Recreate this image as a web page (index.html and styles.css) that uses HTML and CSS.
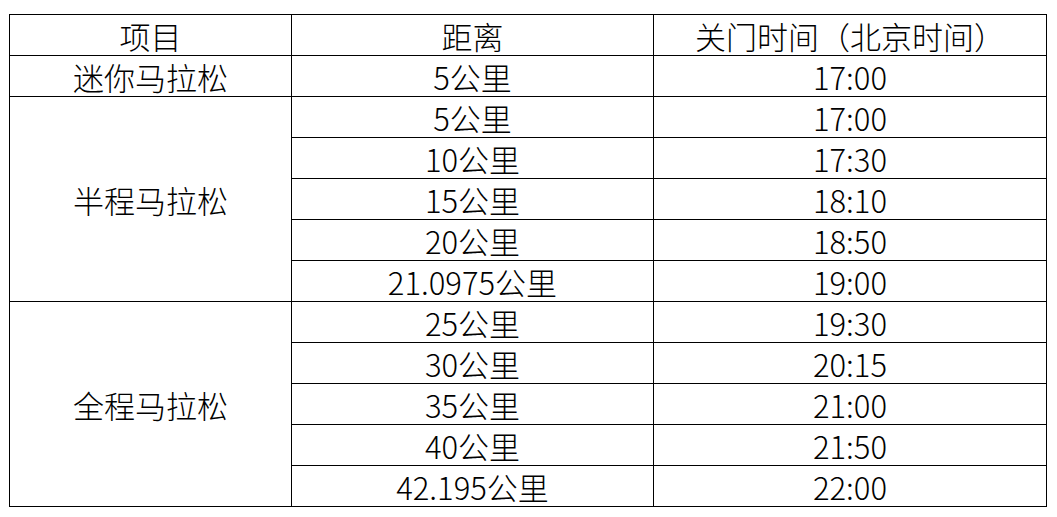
FILE: index.html
```html
<!DOCTYPE html>
<html lang="zh">
<head>
<meta charset="utf-8">
<link rel="stylesheet" href="styles.css">
</head>
<body>
<div class="page">
<table class="grid">
  <colgroup><col class="c1"><col class="c2"><col class="c3"></colgroup>
  <tr><td>项目</td><td>距离</td><td>关门时间（北京时间）</td></tr>
  <tr><td>迷你马拉松</td><td>5公里</td><td>17:00</td></tr>
  <tr><td rowspan="5">半程马拉松</td><td>5公里</td><td>17:00</td></tr>
  <tr><td>10公里</td><td>17:30</td></tr>
  <tr><td>15公里</td><td>18:10</td></tr>
  <tr><td>20公里</td><td>18:50</td></tr>
  <tr><td>21.0975公里</td><td>19:00</td></tr>
  <tr><td rowspan="5">全程马拉松</td><td>25公里</td><td>19:30</td></tr>
  <tr><td>30公里</td><td>20:15</td></tr>
  <tr><td>35公里</td><td>21:00</td></tr>
  <tr><td>40公里</td><td>21:50</td></tr>
  <tr><td>42.195公里</td><td>22:00</td></tr>
</table>
</div>
</body>
</html>
```
FILE: styles.css
```css
html, body { margin: 0; padding: 0; background: #fff; }
.page { padding: 14px 0 0 9px; }
.grid {
  border-collapse: collapse;
  table-layout: fixed;
  width: 1037px;
  font-family: "Noto Sans CJK SC", "Noto Sans", sans-serif;
  font-size: 31px;
  font-weight: 300;
  color: #000;
}
.c1 { width: 282px; }
.c2 { width: 362px; }
.c3 { width: 393px; }
.grid td {
  border: 1px solid #000;
  height: 40px;
  padding: 2px 0 0;
  box-sizing: border-box;
  text-align: center;
  vertical-align: middle;
  line-height: 38px;
  white-space: nowrap;
}
```
